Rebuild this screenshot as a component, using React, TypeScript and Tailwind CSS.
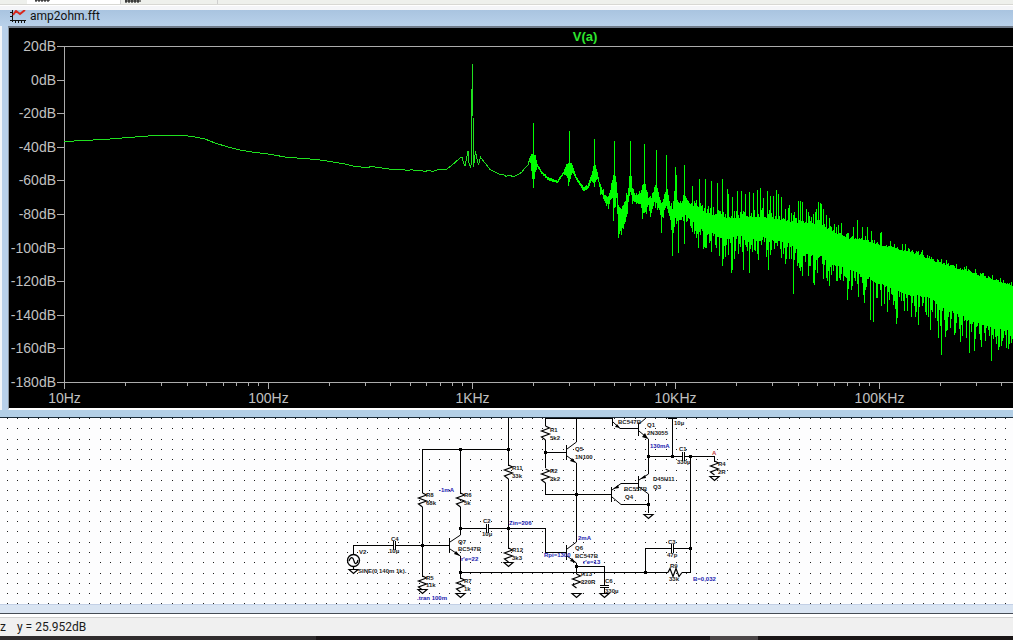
import React from 'react';

type Point = [number, number];

const DECADE = 203.7;
const decades = [
  { x: 64.5, label: '10Hz' },
  { x: 268.5, label: '100Hz' },
  { x: 472.5, label: '1KHz' },
  { x: 675.5, label: '10KHz' },
  { x: 879.5, label: '100KHz' },
];
const levels = [20, 0, -20, -40, -60, -80, -100, -120, -140, -160, -180];

// Smooth part of the spectrum, before the noise floor gets dense
const trace =
  '64,113.5 85,112.5 110,111 135,109 155,107.5 185,107.5 195,109 205,111 215,115 228,119 240,122 252,124 268,126 288,129.5 305,130.5 320,132 333,134 345,136 355,138.5 367,139.5 372,138.5 385,140.5 397,142 400,141 408,142.5 412,141.5 416,143 420,142 424,143.5 429,142.5 433,143.5 440,141 447,141 451,138 455,134.5 460,130 462,129 464,136 465,138 468,123 469,135 471,140 471.5,87 472.5,36 473.5,139 475.5,123 477,131 478.5,137 480.5,129 485,135 490,141.5 495,144 500,146.5 503,146 506,148.5 510,147 513,149 518,146.5 522,144 525,140 528,137 530,130';

// x, top and bottom of the filled noise band
const band: [number, number, number][] = [
  [530, 128, 134], [532, 126, 150], [533, 126, 156], [535, 128, 144], [537, 136, 139],
  [541, 143, 145], [548, 150, 152], [557, 153, 155], [563, 144, 146], [566, 137, 148],
  [569, 134, 153], [572, 137, 144], [576, 149, 152], [583, 159, 163], [587, 158, 161],
  [591, 147, 153], [594, 134, 156], [597, 145, 150], [600, 158, 162], [604, 168, 172],
  [608, 170, 176], [612, 155, 168], [614, 143, 180], [616, 155, 167], [618, 178, 205],
  [621, 181, 202], [625, 173, 193], [628, 164, 174], [630, 138, 162], [632, 165, 172],
  [636, 168, 175], [640, 165, 175], [644, 154, 184], [648, 171, 177], [651, 170, 184],
  [654, 163, 174], [656, 156, 174], [659, 173, 181], [661, 177, 193], [664, 168, 180],
  [666, 160, 176], [670, 178, 192], [672, 181, 212], [675, 160, 190], [677, 173, 191],
  [680, 178, 192], [684, 168, 186], [690, 177, 192], [695, 180, 193], [700, 182, 200],
  [710, 187, 204], [720, 189, 210], [730, 191, 210], [740, 190, 206], [750, 190, 212],
  [760, 189, 208], [770, 190, 212], [780, 192, 212], [790, 194, 216], [800, 195, 224],
  [810, 196, 227], [820, 196, 227], [830, 203, 234], [840, 207, 238], [850, 211, 240],
  [860, 212, 246], [870, 214, 248], [880, 218, 254], [890, 219, 260], [900, 222, 264],
  [910, 225, 266], [920, 228, 268], [930, 232, 270], [940, 236, 276], [950, 239, 282],
  [960, 242, 286], [970, 244, 292], [980, 248, 296], [990, 251, 298], [1000, 254, 300],
  [1013, 258, 303], [1400, 385, 370],
];

const harmonics: Point[] = [
  [533, 95], [569, 103], [594, 111], [614, 113], [630, 113], [644, 116], [656, 122], [666, 127],
  [675, 139], [676, 147], [684, 137], [692, 158], [699, 151], [705, 151], [711, 153], [717, 155],
  [722, 151], [727, 161], [728, 166], [732, 169], [737, 163], [741, 163], [745, 166], [749, 164],
  [753, 165], [757, 162], [760, 160], [763, 170], [767, 163], [770, 168], [773, 168], [776, 162],
  [778, 166], [781, 169], [785, 181], [788, 180], [789, 177], [794, 184], [798, 173], [800, 173],
  [802, 174], [806, 181], [808, 184], [813, 186], [815, 184], [816, 181], [818, 174], [820, 175],
  [821, 176], [823, 181], [826, 187], [829, 190], [834, 196], [838, 197], [841, 195], [848, 205],
  [853, 199], [857, 192], [862, 199], [867, 199], [871, 203], [880, 205], [881, 204], [890, 213],
  [902, 216], [905, 216], [922, 222], [946, 232], [966, 238],
];

const dips: Point[] = [
  [533, 160], [568, 158], [594, 159], [613, 193], [618, 210], [642, 191], [650, 189], [661, 205],
  [672, 228], [678, 225], [684, 216], [692, 202], [696, 210], [711, 224], [722, 238], [731, 245],
  [732, 242], [743, 242], [749, 245], [768, 242], [785, 236], [793, 266], [813, 255], [814, 257],
  [829, 258], [847, 272], [858, 269], [864, 275], [870, 292], [873, 294], [887, 284], [896, 296],
  [897, 290], [911, 289], [918, 297], [930, 302], [938, 310], [941, 327], [945, 309], [954, 307],
  [960, 314], [969, 325], [974, 323], [981, 319], [991, 333], [1006, 320],
];

const noise = (n: number) => {
  const v = Math.sin(n * 12.9898) * 43758.5453;
  return v - Math.floor(v);
};

const noisePath = () => {
  const tops = new Map(harmonics);
  const bottoms = new Map(dips);
  let d = '';
  let i = 0;
  for (let x = 530; x < 1400; x++) {
    while (x > band[i + 1][0]) i++;
    const [x0, t0, b0] = band[i];
    const [x1, t1, b1] = band[i + 1];
    const k = (x - x0) / (x1 - x0);
    const rise = x < 600 ? 1 : x > 690 && x < 840 ? 9 : 5;
    const drop = x < 600 ? 1 : x < 690 ? 6 : 24;
    let top = t0 + (t1 - t0) * k - noise(x) ** 2 * rise;
    let bottom = b0 + (b1 - b0) * k + noise(x + 0.37) ** 2 * drop;
    top = Math.min(top, tops.get(x) ?? top);
    bottom = Math.max(bottom, bottoms.get(x) ?? bottom);
    if (bottom > top) d += `M${x}.5 ${Math.round(top)}V${Math.round(bottom)}`;
  }
  return d;
};

const minorTicks = () => {
  let d = '';
  for (let n = 0; n < 7; n++) {
    for (let m = 2; m < 10; m++) {
      d += `M${Math.floor(64.5 + DECADE * (n + Math.log10(m)))}.5 354v4`;
    }
  }
  return d;
};

const Plot: React.FC = () => (
  <svg role="img" aria-label="V(a) spectrum" className="block w-full h-[380px] bg-black overflow-hidden">
    <g transform="translate(-9 0)">
      <g stroke="#acacac" fill="none" shapeRendering="crispEdges">
        <path d="M57 18.5H3000M57 354.5H3000M64.5 18V361" />
        <path d={levels.map((_, i) => `M57 ${Math.round(18 + i * 33.6)}.5h8`).join('')} />
        <path d={decades.map((t) => `M${t.x} 354v7`).join('')} />
        <path d={minorTicks()} />
      </g>
      <g className="font-['Liberation_Sans'] text-[14px]" fill="#c0c0c0">
        {levels.map((level, i) => (
          <text key={level} x={56} y={Math.round(23 + i * 33.6)} textAnchor="end">{level}dB</text>
        ))}
        {decades.map((t) => (
          <text key={t.label} x={t.x} y={375} textAnchor="middle">{t.label}</text>
        ))}
      </g>
      <text x={585} y={13} textAnchor="middle" fill="#2fe52f" className="font-['Liberation_Sans'] font-bold text-[13px]">V(a)</text>
      <polyline points={trace} fill="none" stroke="#1fe01f" shapeRendering="crispEdges" />
      <path d={noisePath()} stroke="#00ff00" shapeRendering="crispEdges" />
    </g>
  </svg>
);

const gridDots = () => {
  let d = '';
  for (let row = 0; row < 19; row++) {
    for (let col = 0; col < 200; col++) {
      d += `M${7 + Math.round(col * 10.29)} ${Math.round(row * 10.3)}h1v1h-1z`;
    }
  }
  return d;
};

const wires = [
  'M422.5 75V31.5H508.5M508.5 0V48M508.5 61V131M460.5 31V76M422.5 89V159M460.5 89V117',
  'M353.5 136V127.5H393M396 127.5H449M460.5 138V161M460 110.5H486M489 110.5H545.5V134.5H566',
  'M460 154.5H668M545.5 8V0.5H612M545.5 22V50M545.5 65V76.5H611M545 34.5H566',
  'M576.5 0V24M576.5 45V124M576.5 145V156M576 148.5H604.5V167M604.5 170V175',
  'M648.5 21V56M648.5 76V95M648 38.5H682M685 38.5H714.5V44M690.5 38V154.5H682',
  'M645.5 154V130.5H671M674 130.5H690M672.5 0V38M620 10.5H638M621 65.5H638M621 86.5H648',
];

const plates = [
  'M393.5 123v9M395.5 123v9M486.5 106v9M488.5 106v9M682.5 34v9M684.5 34v9',
  'M671.5 126v9M673.5 126v9M600 167.5h9M600 169.5h9M668 0.5h9',
];

const transistors = [
  'M449.5 120v15M460.5 117L450 124M450 131L460.5 138',
  'M566.5 27v15M576.5 24L567 31M567 38L576.5 45',
  'M566.5 127v15M576.5 124L567 131M567 138L576.5 145',
  'M638.5 5v13M646 0L639 6M639 13L648.5 21',
  'M638.5 58v15M648.5 56L639 62M639 69L648.5 76',
  'M611.5 69v15M621 65.5L612 72M612 79L621 86.5',
  'M612.5 0v8M613 4L620 10.5',
];

const arrows = [
  'M460 138l-6-2 2-3z', 'M576 45l-6-2 2-3z', 'M576 145l-6-2 2-3z', 'M648 21l-6-2 3-4z',
  'M640 61l5-4 1 3z', 'M613 71l5-4 1 3z', 'M620 10l-5-1 2-3z',
];

const resistors: Point[] = [
  [422, 75], [460, 75], [508, 47], [508, 130], [422, 158], [460, 160],
  [545, 8], [545, 51], [576, 156], [714, 43],
];
const grounds: Point[] = [[353, 151], [422, 171], [460, 175], [508, 144], [576, 175], [604, 175], [648, 96], [714, 58]];
const junctions: Point[] = [
  [460, 31], [508, 31], [422, 127], [460, 110], [508, 110], [460, 154], [545, 34], [576, 76],
  [576, 148], [648, 38], [672, 38], [690, 38], [648, 86], [690, 130], [645, 154],
];

const partLabels: [number, number, string][] = [
  [359, 136, 'V2'], [358, 155, 'SINE(0 140m 1k).'], [391, 123, 'C4'], [389, 135, '10µ'],
  [426, 79, 'R8'], [426, 87, '68k'], [464, 79, 'R6'], [464, 87, '5k'],
  [483, 105, 'C2'], [482, 118, '10µ'], [512, 52, 'R11'], [512, 60, '33k'],
  [512, 134, 'R12'], [512, 142, '3k3'], [458, 126, 'Q7'], [458, 133, 'BC547B'],
  [464, 165, 'R7'], [464, 173, '1k'], [426, 162, 'R5'], [426, 169, '11k'],
  [550, 14, 'R1'], [550, 22, '5k2'], [575, 33, 'Q5'], [575, 41, '1N100'],
  [550, 55, 'R2'], [550, 63, '2k2'], [575, 132, 'Q6'], [575, 140, 'BC547B'],
  [581, 158, 'R13'], [581, 166, '220R'], [605, 165, 'C6'], [605, 175, '330µ'],
  [618, 6, 'BC547B'], [647, 9, 'Q1'], [647, 17, '2N3055'], [674, 7, '10µ'],
  [679, 33, 'C1'], [677, 46, '330µ'], [718, 48, 'R4'], [718, 56, '2R'],
  [624, 73, 'BC557B'], [625, 81, 'Q4'], [653, 63, 'D45H11'], [653, 71, 'Q3'],
  [668, 126, 'C3'], [667, 139, '47p'], [670, 150, 'R9'], [669, 163, '33k'],
];
const notes: [number, number, string][] = [
  [439, 74, '-1mA'], [509, 107, 'Zin=206'], [461, 143, "r'e=22"], [417, 182, '.tran 100m'],
  [578, 122, '2mA'], [544, 139, 'Rpi=1300'], [583, 146, "r'e=13"], [650, 30, '130mA'], [693, 163, 'B=0,032'],
];

const Schematic: React.FC = () => (
  <svg role="img" aria-label="Amplifier schematic" className="block w-full h-[186px] bg-[#fdfdfe] overflow-hidden">
    <path d={gridDots()} fill="#1c1c1c" shapeRendering="crispEdges" />
    <g stroke="#000" fill="none">
      <path d={wires.join('')} shapeRendering="crispEdges" />
      <path d={plates.join('')} shapeRendering="crispEdges" />
      <path d={transistors.join('')} />
      {resistors.map(([x, y]) => (
        <path key={`${x}-${y}`} strokeWidth="1.2" d={`M${x}.5 ${y}l4 2-8 3 8 3-8 3 4 3`} />
      ))}
      <path d="M668 154.5l2-4 3 8 3-8 3 8 3-4" strokeWidth="1.2" />
      {grounds.map(([x, y]) => (
        <path key={`${x}-${y}`} strokeWidth="1.2" d={`M${x - 4} ${y}.5h9l-4.5 4z`} />
      ))}
      <circle cx="353.5" cy="142.5" r="6" strokeWidth="1.3" />
      <path d="M349 143c2-5 4-4 5 0s3 3 4-1M353.5 149v3" strokeWidth="1.2" />
    </g>
    <path d={arrows.join('')} fill="#000" />
    <path d={junctions.map(([x, y]) => `M${x - 1} ${y - 1}h3v3h-3z`).join('')} fill="#000" shapeRendering="crispEdges" />
    <g className="font-['Liberation_Sans'] text-[6px]">
      <g fill="#1c1c1c" className="font-bold">
        {partLabels.map(([x, y, text]) => (
          <text key={`${x}-${y}`} x={x} y={y}>{text}</text>
        ))}
      </g>
      <g fill="#1a1ab0" className="font-bold">
        {notes.map(([x, y, text]) => (
          <text key={`${x}-${y}`} x={x} y={y}>{text}</text>
        ))}
      </g>
      <text x={712} y={37} fill="#c04040" className="font-bold">A</text>
    </g>
  </svg>
);

const TabStrip: React.FC = () => (
  <div className="h-[10px] bg-[#f4f5f8]">
    <div className="flex h-1 bg-[#eef0ec]">
      <div className="w-[27px]" />
      <div className="w-[94px] bg-white border-r border-[#cfcfcf] flex items-start pl-2">
        <svg width="16" height="2"><path d="M0 0h15M1 0v2M4 0v2M7 0v2M10 0v2M13 0v2" stroke="#000" /></svg>
      </div>
      <div className="w-[97px] border-r border-[#cfcfcf] flex items-start pl-1">
        <svg width="16" height="3"><path d="M0 1h16M1 0v3M4 0v3M7 0v3M10 0v3M13 0v3" stroke="#000" /></svg>
      </div>
    </div>
    <div className="h-px bg-[#d8d8d4]" />
    <div className="h-px bg-white" />
  </div>
);

const PlotWindow: React.FC = () => (
  <section className="flex flex-col bg-[#b8d0ea] border-b border-[#1c2c38]">
    <header className="h-4 flex items-start bg-linear-to-b from-[#a9c4e0] to-[#b9d1ea] pl-[10px] gap-1">
      <svg width="16" height="14" viewBox="0 0 16 14">
        <path d="M2.5 0v12M0 10.5h16M5.5 10v3M8.5 10v3M11.5 10v3M14.5 10v3M0 2.5h3M0 6.5h3" stroke="#111" fill="none" />
        <path d="M3 5L6 1L10 4L15 0" stroke="#d8281e" strokeWidth="2" fill="none" />
      </svg>
      <h1 className="font-['Roboto'] text-[12px] leading-3 text-[#111]">amp2ohm.fft</h1>
    </header>
    <div className="flex">
      <div className="w-2 shrink-0 border-l-2 border-[#f2f5f9]" />
      <div className="grow min-w-0 border-t-2 border-l border-b-2 border-t-[#6f7a88] border-l-[#8b95a0] border-b-white">
        <Plot />
      </div>
    </div>
    <div className="h-[7px] bg-[#b3cfe6]" />
  </section>
);

export default function App() {
  return (
    <main className="flex flex-col w-full overflow-hidden bg-[#f0f0f0]">
      <TabStrip />
      <PlotWindow />
      <Schematic />
      <div className="h-[9px] bg-[#d9e4f2] border-t border-[#c3d0e6]" />
      <div className="h-[5px] bg-white border-t border-b border-t-[#454c55] border-b-[#cfcfcf]" />
      <footer className="h-[18px] flex items-center gap-[11px] bg-[#f0f0f0] font-['Roboto'] text-[12px] leading-4 text-[#1a1a1a]">
        <span>z</span>
        <span>y = 25.952dB</span>
      </footer>
      <div className="h-1 flex bg-[#1a1516]">
        <div className="w-[316px] bg-[#302d2e]" />
        <div className="w-[394px]" />
        <div className="w-12 bg-[#4b4647]" />
      </div>
    </main>
  );
}
